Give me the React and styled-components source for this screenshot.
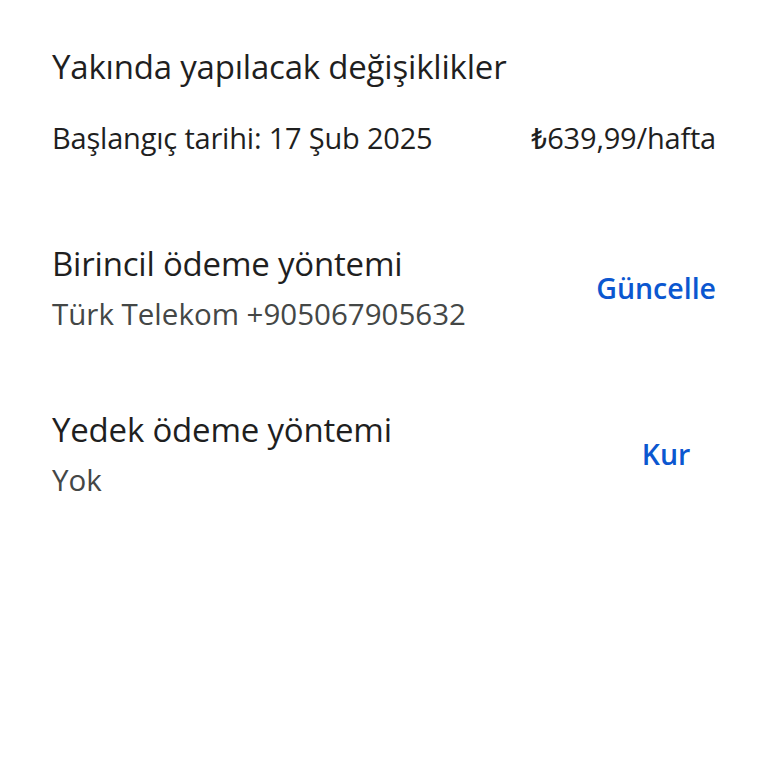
import React from 'react'
import styled, { createGlobalStyle } from 'styled-components'

const Global = createGlobalStyle`
  html, body {
    margin: 0;
    padding: 0;
    background: #ffffff;
  }
  body {
    font-family: "Open Sans", Roboto, "Liberation Sans", sans-serif;
    -webkit-font-smoothing: antialiased;
  }
`

function App() {
  return (
    <Page>
      <Global />
      <Section>
        <Title>Yakında yapılacak değişiklikler</Title>
        <PriceRow>
          <Body>Başlangıç tarihi: 17 Şub 2025</Body>
          <Body>₺639,99/hafta</Body>
        </PriceRow>
      </Section>

      <MethodRow>
        <div>
          <Title>Birincil ödeme yöntemi</Title>
          <Secondary>Türk Telekom +905067905632</Secondary>
        </div>
        <LinkButton>Güncelle</LinkButton>
      </MethodRow>

      <MethodRow>
        <div>
          <Title>Yedek ödeme yöntemi</Title>
          <Secondary>Yok</Secondary>
        </div>
        <LinkButton>Kur</LinkButton>
      </MethodRow>
    </Page>
  )
}

export default App

const Page = styled.div`
  width: 768px;
  height: 768px;
  box-sizing: border-box;
  padding: 45px 28px 0 52px;
  background: #ffffff;
  color: #1f1f1f;
`

const Section = styled.div`
  padding-right: 24px;
  margin-bottom: 84px;
`

const Title = styled.div`
  font-size: 33px;
  line-height: 44px;
  letter-spacing: -0.2px;
  color: #1f1f1f;
`

const PriceRow = styled.div`
  display: flex;
  justify-content: space-between;
  align-items: center;
  margin-top: 29px;
`

const Body = styled.div`
  font-size: 29px;
  line-height: 40px;
  letter-spacing: -0.2px;
  color: #1f1f1f;
`

const Secondary = styled.div`
  margin-top: 8px;
  font-size: 29.5px;
  line-height: 40px;
  color: #444746;
`

const MethodRow = styled.div`
  display: flex;
  justify-content: space-between;
  align-items: center;
  margin-bottom: 74px;
`

const LinkButton = styled.button`
  border: 0;
  background: none;
  min-width: 148px;
  padding: 10px 24px;
  font-family: inherit;
  font-size: 28.5px;
  font-weight: 600;
  color: #0b57d0;
  text-align: center;
`
